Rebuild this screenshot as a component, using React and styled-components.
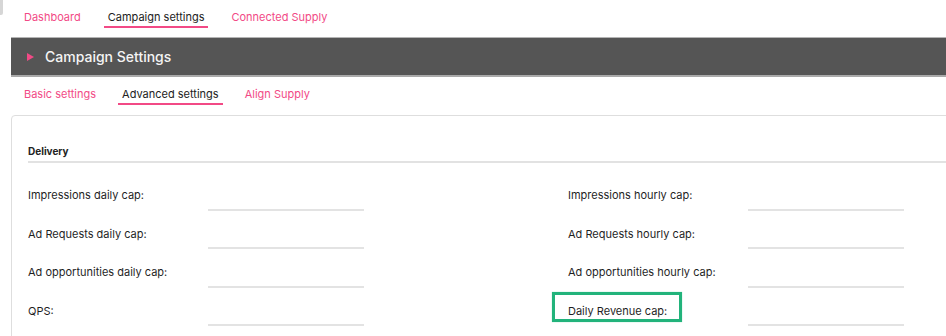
import React from "react";
import styled, { createGlobalStyle } from "styled-components";

const GlobalStyle = createGlobalStyle`
  html, body {
    margin: 0;
    padding: 0;
    background: #fff;
    overflow: hidden;
  }
  body {
    font-family: Inter, "Noto Sans", "Liberation Sans", sans-serif;
    color: #2e2e2e;
  }
`;

const PINK = "#f24a86";

const Page = styled.div`
  position: relative;
  width: 100%;
  padding-left: 11px;
  box-sizing: border-box;
`;

const EdgeHandle = styled.div`
  position: absolute;
  left: 0;
  top: 0;
  width: 3px;
  height: 15px;
  background: #d6d6d6;
  border-radius: 0 0 2px 0;
`;

const TabBar = styled.nav`
  display: flex;
  gap: ${(p) => p.$gap}px;
  padding: ${(p) => p.$top}px 0 0 9px;
`;

const Tab = styled.span`
  font-size: 11px;
  line-height: 14px;
  padding: 0 4px 2px;
  color: ${(p) => (p.$active ? "#222" : PINK)};
  border-bottom: 2px solid ${(p) => (p.$active ? PINK : "transparent")};
  white-space: nowrap;
  cursor: pointer;
`;

const PanelHeader = styled.div`
  margin-top: 9px;
  height: 37px;
  display: flex;
  align-items: center;
  gap: 11px;
  padding-left: 16px;
  background: #555555;
  border-top: 1px solid #b4b4b4;
  border-bottom: 2px solid #a9a9a9;
`;

const Caret = styled.svg`
  width: 7px;
  height: 8px;
  flex: none;
`;

const PanelTitle = styled.h2`
  margin: 0;
  font-size: 14px;
  font-weight: 500;
  color: #f4f4f4;
`;

const Card = styled.section`
  margin-top: 10px;
  width: calc(100% + 30px);
  box-sizing: border-box;
  border: 1px solid #dedede;
  border-radius: 4px;
  padding: 29px 0 20px 16px;
`;

const SectionTitle = styled.h3`
  margin: 0;
  font-size: 10px;
  font-weight: 700;
  line-height: 12px;
  color: #222;
  padding-bottom: 4px;
  border-bottom: 2px solid #e2e2e2;
`;

const FieldGrid = styled.div`
  margin-top: 10px;
  display: grid;
  grid-template-columns: 540px 540px;
  grid-auto-rows: 38.5px;
`;

const Field = styled.div`
  display: grid;
  grid-template-columns: 180px 156px;
`;

const Label = styled.label`
  align-self: start;
  padding-top: 15px;
  font-size: 11px;
  line-height: 14px;
  color: #1f1f1f;
  white-space: nowrap;
`;

const LabelText = styled.span`
  position: relative;
  ${(p) =>
    p.$highlight &&
    `
    &::after {
      content: "";
      position: absolute;
      left: -16px;
      right: -15px;
      top: -12px;
      bottom: -4px;
      border: 3px solid #22b37b;
      box-shadow: 0 0 1px #8fdcbc;
      pointer-events: none;
    }
  `}
`;

const Input = styled.input`
  align-self: end;
  height: 24px;
  width: 156px;
  box-sizing: border-box;
  border: none;
  border-bottom: 2px solid #e3e3e3;
  outline: none;
  background: transparent;
  font: inherit;
  font-size: 11px;
  margin-bottom: 1px;
`;

const fields = [
  ["Impressions daily cap:", "Impressions hourly cap:"],
  ["Ad Requests daily cap:", "Ad Requests hourly cap:"],
  ["Ad opportunities daily cap:", "Ad opportunities hourly cap:"],
  ["QPS:", "Daily Revenue cap:"],
];

export default function App() {
  return (
    <>
      <GlobalStyle />
      <Page>
        <EdgeHandle />
        <TabBar $top={10} $gap={19}>
          <Tab>Dashboard</Tab>
          <Tab $active>Campaign settings</Tab>
          <Tab>Connected Supply</Tab>
        </TabBar>

        <PanelHeader>
          <Caret viewBox="0 0 7 8">
            <path d="M0 0 L7 4 L0 8 Z" fill={PINK} />
          </Caret>
          <PanelTitle>Campaign Settings</PanelTitle>
        </PanelHeader>

        <TabBar $top={10} $gap={18}>
          <Tab>Basic settings</Tab>
          <Tab $active>Advanced settings</Tab>
          <Tab>Align Supply</Tab>
        </TabBar>

        <Card>
          <SectionTitle>Delivery</SectionTitle>
          <FieldGrid>
            {fields.flat().map((name) => (
              <Field key={name}>
                <Label>
                  <LabelText $highlight={name === "Daily Revenue cap:"}>{name}</LabelText>
                </Label>
                <Input aria-label={name} />
              </Field>
            ))}
          </FieldGrid>
        </Card>
      </Page>
    </>
  );
}
